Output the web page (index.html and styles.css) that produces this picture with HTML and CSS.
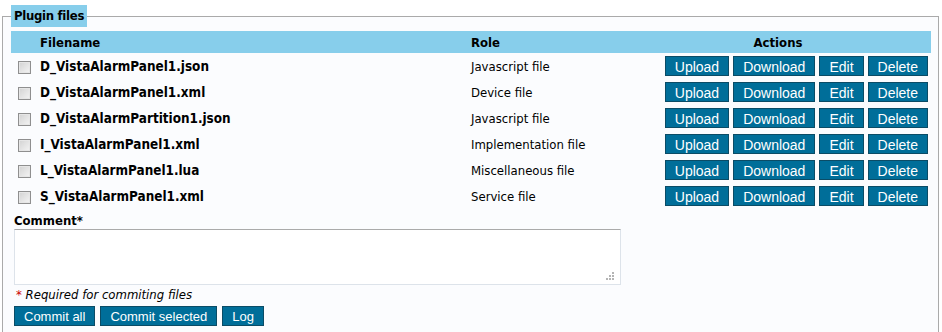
FILE: index.html
```html
<!DOCTYPE html>
<html>
<head>
    <title>Plugin files</title>
    <link rel="stylesheet" href="styles.css">
</head>
<body>
    <fieldset class="files-box">
        <legend>Plugin files</legend>
        <table class="files-table">
            <tr>
                <th class="col-check"></th>
                <th class="col-name">Filename</th>
                <th class="col-role">Role</th>
                <th class="col-actions">Actions</th>
            </tr>
            <tr>
                <td><input type="checkbox"></td>
                <td class="fname">D_VistaAlarmPanel1.json</td>
                <td>Javascript file</td>
                <td class="actions"><button>Upload</button><button>Download</button><button>Edit</button><button>Delete</button></td>
            </tr>
            <tr>
                <td><input type="checkbox"></td>
                <td class="fname">D_VistaAlarmPanel1.xml</td>
                <td>Device file</td>
                <td class="actions"><button>Upload</button><button>Download</button><button>Edit</button><button>Delete</button></td>
            </tr>
            <tr>
                <td><input type="checkbox"></td>
                <td class="fname">D_VistaAlarmPartition1.json</td>
                <td>Javascript file</td>
                <td class="actions"><button>Upload</button><button>Download</button><button>Edit</button><button>Delete</button></td>
            </tr>
            <tr>
                <td><input type="checkbox"></td>
                <td class="fname">I_VistaAlarmPanel1.xml</td>
                <td>Implementation file</td>
                <td class="actions"><button>Upload</button><button>Download</button><button>Edit</button><button>Delete</button></td>
            </tr>
            <tr>
                <td><input type="checkbox"></td>
                <td class="fname">L_VistaAlarmPanel1.lua</td>
                <td>Miscellaneous file</td>
                <td class="actions"><button>Upload</button><button>Download</button><button>Edit</button><button>Delete</button></td>
            </tr>
            <tr>
                <td><input type="checkbox"></td>
                <td class="fname">S_VistaAlarmPanel1.xml</td>
                <td>Service file</td>
                <td class="actions"><button>Upload</button><button>Download</button><button>Edit</button><button>Delete</button></td>
            </tr>
        </table>
        <div class="commit">
            <label class="comment-label">Comment*</label>
            <div class="comment-wrap">
                <textarea class="comment"></textarea>
                <svg class="grip" width="8" height="8" viewBox="0 0 8 8">
                    <rect x="6" y="0" width="2" height="2" fill="#b4b4b4"/>
                    <rect x="3" y="3" width="2" height="2" fill="#b4b4b4"/>
                    <rect x="6" y="3" width="2" height="2" fill="#b4b4b4"/>
                    <rect x="0" y="6" width="2" height="2" fill="#b4b4b4"/>
                    <rect x="3" y="6" width="2" height="2" fill="#b4b4b4"/>
                    <rect x="6" y="6" width="2" height="2" fill="#b4b4b4"/>
                </svg>
            </div>
            <p class="required"><span class="star">*</span> Required for commiting files</p>
            <div class="commit-buttons">
                <button>Commit all</button><button>Commit selected</button><button>Log</button>
            </div>
        </div>
    </fieldset>
</body>
</html>
```

FILE: styles.css
```css
body {
    margin: 0;
    background: #fff;
    font-family: "DejaVu Sans Condensed", "DejaVu Sans", sans-serif;
    font-size: 13px;
    color: #000;
}

.files-box {
    margin: 5px 3px 0 2px;
    padding: 4px 7px 10px 8px;
    border: 1px solid #aaa;
    border-bottom: none;
    background: #fbfcfe;
    min-height: 330px;
    box-sizing: border-box;
}

.files-box legend {
    background: #87ceeb;
    font-weight: bold;
    line-height: 16px;
    padding: 3px 3px 3px 3px;
    margin-left: 0;
    letter-spacing: -0.3px;
}

.files-table {
    width: 100%;
    border-collapse: collapse;
}

.files-table th {
    background: #87ceeb;
    text-align: left;
    height: 22px;
    padding: 0;
    font-weight: bold;
}

.files-table td {
    height: 26px;
    padding: 0;
}

.col-check {
    width: 29px;
}

.col-role {
    width: 154px;
}

.files-table th.col-actions {
    width: 306px;
    text-align: center;
}

/* checkbox gris, style ancien */
.files-table td input {
    -webkit-appearance: none;
    appearance: none;
    margin: 0 0 0 7px;
    width: 13px;
    height: 13px;
    box-sizing: border-box;
    border: 1px solid #8f8f8f;
    background: linear-gradient(135deg, #d2d2d2, #f4f4f4);
    box-shadow: inset 0 0 0 1px #e6e6e6;
    vertical-align: middle;
}

.fname {
    font-weight: bold;
    font-size: 13.4px;
}

.actions {
    text-align: right;
    padding-right: 3px !important;
}

button {
    font-family: "Liberation Sans", Arial, sans-serif;
    font-size: 14px;
    color: #fff;
    background: #006e99;
    border: 1px solid #0b4c66;
    height: 20px;
    padding: 1px 9px 0 9px;
    margin-left: 4px;
    vertical-align: middle;
    line-height: 18px;
}

.commit {
    padding-left: 3px;
}

.comment-label {
    display: block;
    font-weight: bold;
    margin-top: 4px;
}

.comment-wrap {
    position: relative;
    width: 607px;
    margin-top: 1px;
}

.comment {
    display: block;
    width: 607px;
    height: 56px;
    box-sizing: border-box;
    border: 1px solid #dde3ea;
    border-top-color: #aaa;
    background: #fff;
    resize: none;
}

.grip {
    position: absolute;
    right: 7px;
    bottom: 5px;
}

.required {
    font-style: italic;
    margin: 2px 0 4px 2px;
}

.star {
    color: #c00;
}

.commit-buttons button {
    font-size: 13px;
    margin: 0 5px 0 0;
}
```
